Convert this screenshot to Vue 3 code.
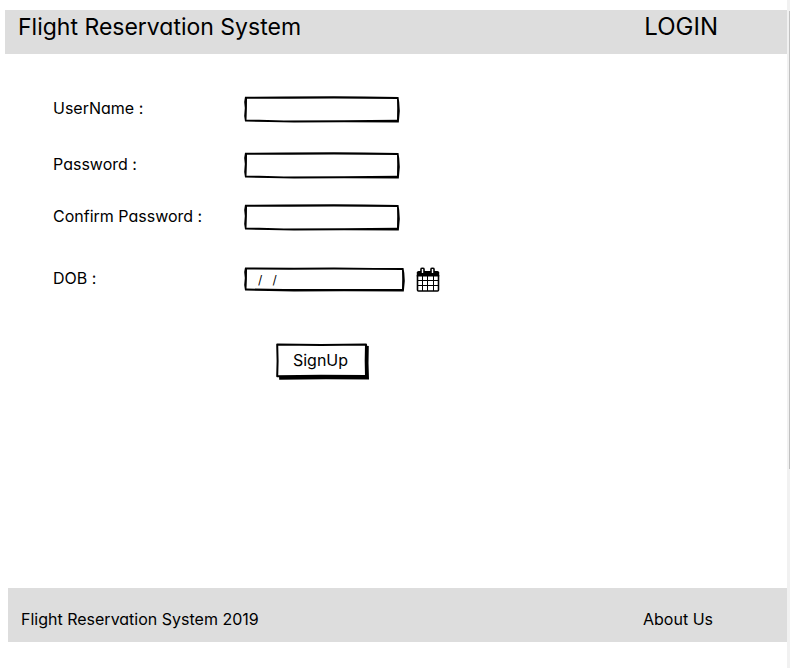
<script setup>
import { ref } from 'vue'

const fields = [
  { id: 'username', label: 'UserName :', type: 'text' },
  { id: 'password', label: 'Password :', type: 'password' },
  { id: 'confirm', label: 'Confirm Password :', type: 'password' },
]
const values = ref({ username: '', password: '', confirm: '' })
const dob = ref('/   /')
</script>

<template>
  <div class="shell">
    <div class="page">
      <header class="bar top">
        <h1>Flight Reservation System</h1>
        <a href="#login">LOGIN</a>
      </header>

      <main>
        <form @submit.prevent>
          <div v-for="f in fields" :key="f.id" class="row" :class="f.id">
            <label :for="f.id">{{ f.label }}</label>
            <div class="box">
              <svg viewBox="0 0 156 27" preserveAspectRatio="none" aria-hidden="true">
                <path d="M1 .8 40 .6 90 .2 120 .6 154.500 1 155.200 6 155.800 15 154.800 26.400 100 26.200 50 26.500 25 26 1 25.600 .2 20 .8 12 .2 6ZM3 2.800 2.900 12 2.500 23.800 15 23.800 40 24.400 100 24.200 153 23.800 153.200 12 153 3 90 2.400 45 2.800Z" fill-rule="evenodd" />
              </svg>
              <input :id="f.id" v-model="values[f.id]" :type="f.type" />
            </div>
          </div>

          <div class="row dob">
            <label for="dob">DOB :</label>
            <div class="box wide">
              <svg viewBox="0 0 161 25" preserveAspectRatio="none" aria-hidden="true">
                <path d="M1 .4 50 .8 90 .4 130 .9 159.500 .9 160.300 6 160.800 14 159.800 24.400 100 24.200 50 24.400 25 24 1 23.600 .2 18 .8 11 .2 5ZM3 2.500 2.900 12 2.500 21.500 40 22 100 22 158 22 158.200 12 158 3 90 2.600 45 2.800Z" fill-rule="evenodd" />
              </svg>
              <input id="dob" v-model="dob" type="text" />
            </div>
            <button type="button" class="calendar" aria-label="Choose date">
              <svg width="24" height="25" viewBox="0 0 24 25" aria-hidden="true">
                <path d="M1.500 8V23Q1.500 24 2.500 24H21.500Q22.500 24 22.500 23V8" fill="#fff" stroke="#000" stroke-width="1.600" />
                <path d="M2.500 4H21.500Q23.200 4 23.200 5.500V9.500H.8V5.500Q.8 4 2.500 4Z" />
                <path d="M6.500 9V24M11.500 9V24M17.500 9V24M2 13.500H22M2 18.500H22" fill="none" stroke="#000" stroke-width="1" />
                <path d="M4.200 6.500V2Q4.200 .6 6.500 .6T8.800 2V6.500ZM14.200 6.500V2Q14.200 .6 16.500 .6T18.800 2V6.500Z" />
                <path d="M5.800 2H7.200V6H5.800ZM15.800 2H17.200V6H15.800Z" fill="#fff" />
              </svg>
            </button>
          </div>

          <button type="submit" class="signup">
            <svg viewBox="0 0 93 37" preserveAspectRatio="none" aria-hidden="true">
              <path d="M3 32 88 31 89 2.500 92.800 3 92.500 20 93 36.500 50 36.200 3.200 36.800Z" />
              <path d="M1.200 1.500 45 1.900 90 1.500 89.700 18 90 33 45 32.700 1.200 33.200 1.600 18Z" fill="#fff" stroke="#000" stroke-width="2" stroke-linejoin="round" />
            </svg>
            <span>SignUp</span>
          </button>
        </form>
      </main>

      <footer class="bar bottom">
        <span>Flight Reservation System 2019</span>
        <a href="#about">About Us</a>
      </footer>
    </div>
    <div class="track" aria-hidden="true"><div class="thumb"></div></div>
  </div>
</template>

<style>
body {
  background: #fff;
}
</style>

<style scoped>
.shell {
  display: flex;
  min-height: 100vh;
  color: #000;
  font-family: Inter, "Liberation Sans", sans-serif;
  font-feature-settings: "cv11", "calt" 0;
  font-size: 16px;
  line-height: 20px;
}
.page {
  flex: 1;
  display: flex;
  flex-direction: column;
  padding: 10px 0 26px;
}
.track {
  width: 3px;
  padding-top: 11px;
  background: #f1f1f1;
}
.thumb {
  height: 458px;
  margin-left: 2px;
  background: #c1c1c1;
}
.bar {
  display: flex;
  justify-content: space-between;
  background: #ddd;
}
.bar a {
  color: inherit;
  text-decoration: none;
}
.top {
  margin-left: 5px;
  padding: 2px 69px 12px 13px;
  font-size: 24px;
  line-height: 30px;
}
h1 {
  margin: 0;
  font-size: 23px;
  font-weight: 400;
}
.bottom {
  margin-left: 8px;
  padding: 21px 74px 13px 13px;
}
main {
  flex: 1;
  padding: 42px 53px 0;
}
.row {
  display: flex;
  align-items: center;
  margin-bottom: 29px;
}
.row.password {
  margin-bottom: 25px;
}
.row.confirm {
  margin-bottom: 36px;
}
.row.dob {
  margin-bottom: 51px;
}
label {
  width: 191px;
  padding-bottom: 3px;
}
.box {
  position: relative;
  width: 156px;
  height: 27px;
}
.box.wide {
  width: 161px;
  height: 25px;
  margin-right: 11px;
}
.box svg,
.signup svg {
  position: absolute;
  inset: 0;
  width: 100%;
  height: 100%;
}
input {
  position: relative;
  box-sizing: border-box;
  display: block;
  width: 100%;
  height: 100%;
  padding: 0 14px;
  border: 0;
  outline: 0;
  background: transparent;
  color: inherit;
  font: inherit;
}
.wide input {
  font-size: 12px;
}
button {
  padding: 0;
  border: 0;
  background: transparent;
  color: inherit;
  font: inherit;
  font-feature-settings: inherit;
  cursor: pointer;
}
.calendar svg {
  display: block;
}
.signup {
  position: relative;
  display: block;
  min-width: 93px;
  margin-left: 223px;
  padding: 7px 20px 10px 16px;
}
.signup span {
  position: relative;
}
</style>
